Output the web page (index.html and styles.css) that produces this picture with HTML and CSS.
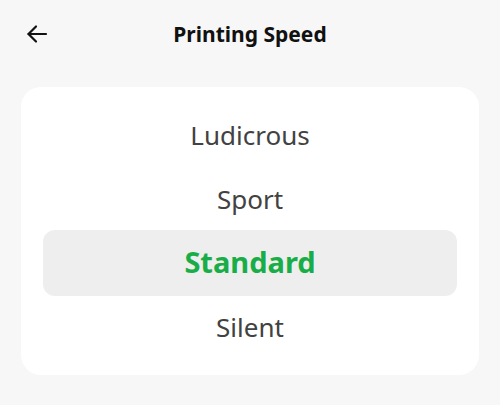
FILE: index.html
```html
<!DOCTYPE html>
<html>
<head>
<meta charset="utf-8">
<link rel="stylesheet" href="styles.css">
</head>
<body>
<div class="page">
  <header class="topbar">
    <button class="back" aria-label="Back">
      <svg width="24" height="24" viewBox="0 0 24 24" fill="none" stroke="#111" stroke-width="2.2" stroke-linecap="round" stroke-linejoin="round">
        <path d="M21 12H3.5"/>
        <path d="M11 4.5L3.5 12L11 19.5"/>
      </svg>
    </button>
    <h1 class="title">Printing Speed</h1>
  </header>
  <div class="card">
    <div class="option">Ludicrous</div>
    <div class="option">Sport</div>
    <div class="option selected">Standard</div>
    <div class="option">Silent</div>
  </div>
</div>
</body>
</html>
```
FILE: styles.css
```css
html, body {
  margin: 0;
  padding: 0;
  background: #f7f7f7;
}
.page {
  width: 500px;
  height: 405px;
  font-family: "Noto Sans", "Open Sans", sans-serif;
}
.topbar {
  position: relative;
  height: 68px;
  display: flex;
  align-items: center;
  justify-content: center;
}
.back {
  position: absolute;
  left: 25px;
  top: 22px;
  width: 24px;
  height: 24px;
  padding: 0;
  border: 0;
  background: none;
  display: flex;
}
.title {
  margin: 0;
  font-size: 21px;
  font-weight: 700;
  color: #111;
  letter-spacing: 0;
}
.card {
  margin: 19px 21px 0;
  background: #fff;
  border-radius: 20px;
  padding: 16px 22px;
  display: flex;
  flex-direction: column;
}
.option {
  height: 64px;
  display: flex;
  align-items: center;
  justify-content: center;
  font-size: 26px;
  color: #424242;
  border-radius: 12px;
}
.option.selected {
  background: #eeeeee;
  color: #19ad48;
  font-size: 29px;
  font-weight: 700;
  height: 66px;
  margin: -1px 0;
  padding-bottom: 4px;
  box-sizing: border-box;
}
```
